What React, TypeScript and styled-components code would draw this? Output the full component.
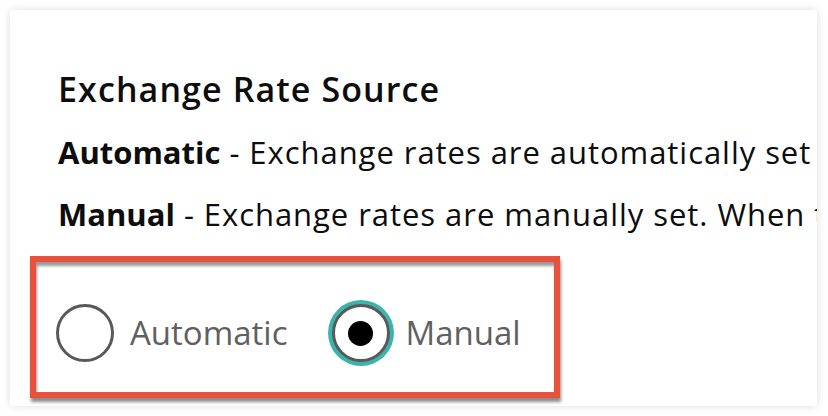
import React from "react";
import styled, { createGlobalStyle } from "styled-components";

const GlobalStyle = createGlobalStyle`
  html, body {
    margin: 0;
    padding: 0;
    background: #ffffff;
  }
  body {
    font-family: "Open Sans", "Liberation Sans", Arial, sans-serif;
  }
`;

const Card = styled.section`
  box-sizing: border-box;
  margin: 10px;
  width: 807px;
  height: 396px;
  background: #ffffff;
  box-shadow: 0 0 9px rgba(0, 0, 0, 0.13);
  overflow: hidden;
  padding: 59px 0 0 48px;
  display: flex;
  flex-direction: column;
  gap: 22px;
`;

const Heading = styled.h2`
  margin: 0 0 1px 0;
  font-size: 34px;
  line-height: 40px;
  font-weight: 600;
  letter-spacing: 1.1px;
  color: #0d0d0d;
  white-space: nowrap;
`;

const Line = styled.p`
  margin: 0;
  font-size: 31px;
  line-height: 40px;
  font-weight: 400;
  letter-spacing: 0.95px;
  color: #0d0d0d;
  white-space: nowrap;
`;

const Strong = styled.strong`
  font-weight: 700;
  letter-spacing: 0;
`;

const Highlight = styled.div`
  align-self: flex-start;
  box-sizing: border-box;
  margin-left: -28px;
  width: 530px;
  height: 142px;
  border: 6px solid #e8513b;
  box-shadow: 1px 4px 3px rgba(0, 0, 0, 0.45), inset 1px 4px 3px rgba(0, 0, 0, 0.4);
  padding: 38px 0 0 16px;
`;

const RadioGroup = styled.div`
  display: flex;
  align-items: center;
  gap: 40px;
  height: 66px;
`;

const Option = styled.label`
  display: flex;
  align-items: center;
  gap: 12px;
  cursor: pointer;
`;

const Circle = styled.span<{ $checked: boolean }>`
  box-sizing: border-box;
  width: 58px;
  height: 58px;
  border-radius: 50%;
  border: 3.5px solid #595959;
  background: #ffffff;
  display: flex;
  align-items: center;
  justify-content: center;
  box-shadow: ${(p) => (p.$checked ? "0 0 0 4px #3cb4ad" : "none")};
  margin: 4px;
`;

const Dot = styled.span`
  width: 25px;
  height: 25px;
  border-radius: 50%;
  background: #000000;
`;

const OptionText = styled.span`
  font-size: 33px;
  line-height: 40px;
  color: #606060;
  font-weight: 400;
`;

const options = [
  { id: "automatic", label: "Automatic" },
  { id: "manual", label: "Manual" },
];

export default function App() {
  const [value, setValue] = React.useState("manual");
  return (
    <>
      <GlobalStyle />
      <Card>
        <Heading>Exchange Rate Source</Heading>
        <Line>
          <Strong>Automatic</Strong> - Exchange rates are automatically set
        </Line>
        <Line>
          <Strong>Manual</Strong> - Exchange rates are manually set. When they change, update them here.
        </Line>
        <Highlight>
          <RadioGroup role="radiogroup">
            {options.map((o) => (
              <Option key={o.id} onClick={() => setValue(o.id)}>
                <Circle $checked={value === o.id} role="radio" aria-checked={value === o.id}>
                  {value === o.id && <Dot />}
                </Circle>
                <OptionText>{o.label}</OptionText>
              </Option>
            ))}
          </RadioGroup>
        </Highlight>
      </Card>
    </>
  );
}
